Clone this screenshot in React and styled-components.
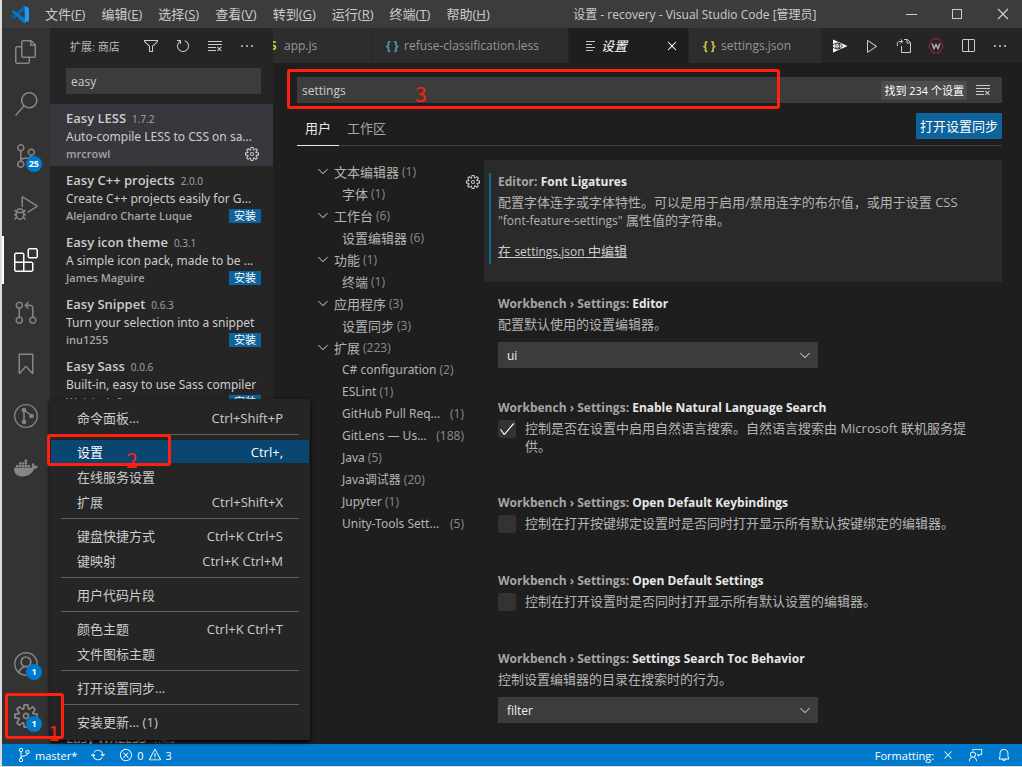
import React from 'react';
import styled, { createGlobalStyle, css } from 'styled-components';
import {
  VscAccount,
  VscBell,
  VscBookmark,
  VscCheck,
  VscChevronDown,
  VscChromeMaximize,
  VscChromeMinimize,
  VscChromeClose,
  VscClearAll,
  VscClose,
  VscDebugAlt,
  VscEllipsis,
  VscError,
  VscExtensions,
  VscFeedback,
  VscFiles,
  VscFilter,
  VscGitPullRequest,
  VscPlay,
  VscRefresh,
  VscSearch,
  VscSettingsGear,
  VscSourceControl,
  VscSplitHorizontal,
  VscSync,
  VscWarning,
  VscGear,
} from 'react-icons/vsc';
import { FaDocker } from 'react-icons/fa';

const menus = [
  ['文件', 'F'], ['编辑', 'E'], ['选择', 'S'], ['查看', 'V'],
  ['转到', 'G'], ['运行', 'R'], ['终端', 'T'], ['帮助', 'H'],
];

const extensions = [
  { name: 'Easy LESS', version: '1.7.2', text: 'Auto-compile LESS to CSS on sa...', author: 'mrcrowl', installed: true },
  { name: 'Easy C++ projects', version: '2.0.0', text: 'Create C++ projects easily for G...', author: 'Alejandro Charte Luque' },
  { name: 'Easy icon theme', version: '0.3.1', text: 'A simple icon pack, made to be ...', author: 'James Maguire' },
  { name: 'Easy Snippet', version: '0.6.3', text: 'Turn your selection into a snippet', author: 'inu1255' },
  { name: 'Easy Sass', version: '0.0.6', text: 'Built-in, easy to use Sass compiler', author: 'Wojciech Sura' },
  { name: 'Easy WXLESS', version: '1.4.0', row: 11 },
];

const toc = [
  { label: '文本编辑器', count: 1, group: true },
  { label: '字体', count: 1 },
  { label: '工作台', count: 6, group: true },
  { label: '设置编辑器', count: 6 },
  { label: '功能', count: 1, group: true },
  { label: '终端', count: 1 },
  { label: '应用程序', count: 3, group: true },
  { label: '设置同步', count: 3 },
  { label: '扩展', count: 223, group: true },
  { label: 'C# configuration', count: 2, latin: true },
  { label: 'ESLint', count: 1, latin: true },
  { label: 'GitHub Pull Req...', count: 1, latin: true, end: true },
  { label: 'GitLens — Us...', count: 188, latin: true, end: true },
  { label: 'Java', count: 5, latin: true },
  { label: 'Java调试器', count: 20, latin: true },
  { label: 'Jupyter', count: 1, latin: true },
  { label: 'Unity-Tools Sett...', count: 5, latin: true, end: true },
];

const menuGroups = [
  [{ label: '命令面板...', keys: 'Ctrl+Shift+P' }],
  [
    { label: '设置', keys: 'Ctrl+,', active: true },
    { label: '在线服务设置' },
    { label: '扩展', keys: 'Ctrl+Shift+X' },
  ],
  [
    { label: '键盘快捷方式', keys: 'Ctrl+K Ctrl+S' },
    { label: '键映射', keys: 'Ctrl+K Ctrl+M' },
  ],
  [{ label: '用户代码片段' }],
  [
    { label: '颜色主题', keys: 'Ctrl+K Ctrl+T' },
    { label: '文件图标主题' },
  ],
  [{ label: '打开设置同步...' }],
  [{ label: '安装更新... (1)' }],
];

const LogoIcon = () => (
  <svg width="17" height="17" viewBox="0 0 100 100" aria-hidden="true">
    <path fill="#0065a9" d="M96 11 75 1c-2-1-5-1-7 1L1 63c-2 2-2 5 0 6l6 5c1 1 3 1 5 0l80-61c3-2 7 0 7 3v-1c0-2-1-3-3-4z" />
    <path fill="#007acc" d="M96 89 75 99c-2 1-5 1-7-1L1 37c-2-2-2-5 0-6l6-5c1-1 3-1 5 0l80 61c3 2 7 0 7-3v1c0 2-1 3-3 4z" />
    <path fill="#1f9cf0" d="M75 99c-2 1-5 1-7-1 2 2 7 1 7-3V5c0-4-5-5-7-3 2-2 5-2 7-1l21 10c2 1 4 3 4 6v66c0 3-2 5-4 6z" />
  </svg>
);

const GitLensIcon = () => (
  <svg width="24" height="24" viewBox="0 0 24 24" fill="none" stroke="currentColor" aria-hidden="true">
    <circle cx="12" cy="12" r="11.3" strokeWidth="1.3" />
    <path d="M10 6v12M10 6l8 6" strokeWidth="1.5" />
    <g fill="currentColor" stroke="none">
      <circle cx="10" cy="6" r="2.3" />
      <circle cx="10" cy="18" r="2.3" />
      <circle cx="17.5" cy="12" r="2.3" />
    </g>
  </svg>
);

const BranchIcon = () => (
  <svg width="14" height="16" viewBox="0 0 14 16" fill="none" stroke="currentColor" aria-hidden="true">
    <circle cx="4" cy="3" r="1.7" />
    <circle cx="4" cy="13" r="1.7" />
    <circle cx="10.5" cy="5" r="1.7" />
    <path d="M4 4.700v6.600M10.500 6.700c0 3-6.500 1.300-6.500 4.300" />
  </svg>
);

const RunEyeIcon = () => (
  <svg width="16" height="16" viewBox="0 0 16 16" aria-hidden="true">
    <path d="M1 1.500 15.500 8 1 14.500z" fill="#fff" />
    <path d="M0 8c3-4 8-4 10.500 0C8 12 3 12 0 8z" fill="#fff" stroke="#222" />
    <circle cx="5.500" cy="8" r="2.400" fill="#e8a0a0" stroke="#222" strokeWidth="0.900" />
    <path d="M5.500 5.600a2.400 2.400 0 0 0 0 4.800z" fill="#9ad0a0" />
  </svg>
);

const OpenFileIcon = () => (
  <svg width="16" height="16" viewBox="0 0 16 16" fill="none" stroke="currentColor" aria-hidden="true">
    <path d="M5.500 8v6.500h9V4.500l-3-3H8M11 1.500V5h3.500" />
    <path d="M1.500 8C.5 5.500 1.500 3.500 4 3.500h2.500M4.500 1.300l2.200 2.200-2.200 2.200" />
  </svg>
);

const WIcon = () => (
  <svg width="16" height="16" viewBox="0 0 16 16" fill="none" aria-hidden="true">
    <path d="M4.700 1h6.600L15.300 8l-4 7H4.700L.7 8z" fill="#2c2326" stroke="#962c3a" />
    <path d="m4 5.500 2 5 2-4 2 4 2-5" stroke="#a8a8a8" strokeWidth="1.600" />
  </svg>
);

const SettingsTabIcon = () => (
  <svg width="10" height="10" viewBox="0 0 10 10" stroke="#c5c5c5" aria-hidden="true">
    <path d="M0 .5h9M0 3.500h6M0 6.500h9M0 9.500h7" />
  </svg>
);

const toolbar = [
  { Icon: VscFilter, name: '筛选' },
  { Icon: VscRefresh, name: '刷新' },
  { Icon: VscClearAll, name: '清除' },
  { Icon: VscEllipsis, name: '更多' },
];

const activity = [
  { Icon: VscFiles, name: '资源管理器' },
  { Icon: VscSearch, name: '搜索' },
  { Icon: VscSourceControl, name: '源代码管理', badge: 25 },
  { Icon: VscDebugAlt, name: '运行和调试' },
  { Icon: VscExtensions, name: '扩展', active: true },
  { Icon: VscGitPullRequest, name: 'GitHub' },
  { Icon: VscBookmark, name: '书签' },
  { Icon: GitLensIcon, name: 'GitLens' },
  { Icon: FaDocker, name: 'Docker' },
];

const editorActions = [
  { Icon: RunEyeIcon, name: '预览' },
  { Icon: VscPlay, name: '运行' },
  { Icon: OpenFileIcon, name: '打开设置(json)' },
  { Icon: WIcon, name: 'W' },
  { Icon: VscSplitHorizontal, name: '拆分编辑器' },
  { Icon: VscEllipsis, name: '更多操作' },
];

function Setting({ category, name, id, focused, space, children }) {
  return (
    <Item $focused={focused} $space={space}>
      {focused && (
        <ItemGear aria-label="更多操作"><VscGear size={16} /></ItemGear>
      )}
      <ItemBody $modified={focused}>
        <ItemTitle as={id ? 'label' : 'h3'} htmlFor={id}>
          <Category>{category}: </Category>
          {name}
        </ItemTitle>
        {children}
      </ItemBody>
    </Item>
  );
}

function SelectSetting({ id, name, text, value }) {
  return (
    <Setting category="Workbench › Settings" name={name} id={id} space={18}>
      <Description>{text}</Description>
      <SelectBox>
        <Select id={id} defaultValue={value}>
          <option>{value}</option>
        </Select>
        <VscChevronDown size={16} />
      </SelectBox>
    </Setting>
  );
}

function CheckSetting({ id, name, text, checked }) {
  return (
    <Setting category="Workbench › Settings" name={name} id={id} space={26}>
      <CheckRow>
        <CheckBox>
          <input type="checkbox" id={id} defaultChecked={checked} />
          {checked && <VscCheck size={18} />}
        </CheckBox>
        <Description>{text}</Description>
      </CheckRow>
    </Setting>
  );
}

export default function App() {
  return (
    <Window>
      <GlobalStyle />
      <TitleBar>
        <Logo><LogoIcon /></Logo>
        <MenuBar>
          {menus.map(([label, key]) => (
            <MenuButton key={key}>{label}(<u>{key}</u>)</MenuButton>
          ))}
        </MenuBar>
        <WindowTitle>设置 - recovery - Visual Studio Code [管理员]</WindowTitle>
        <WindowControls>
          <WindowButton aria-label="最小化"><VscChromeMinimize size={16} /></WindowButton>
          <WindowButton aria-label="最大化"><VscChromeMaximize size={16} /></WindowButton>
          <WindowButton aria-label="关闭"><VscChromeClose size={16} /></WindowButton>
        </WindowControls>
      </TitleBar>

      <Workbench>
        <ActivityBar>
          {activity.map(({ Icon, name, badge, active }) => (
            <ActivityButton key={name} aria-label={name} $active={active}>
              <Icon size={24} />
              {badge && <Badge>{badge}</Badge>}
            </ActivityButton>
          ))}
          <Spacer />
          <ActivityButton aria-label="帐户">
            <VscAccount size={24} />
            <Badge>1</Badge>
          </ActivityButton>
          <ActivityButton aria-label="管理">
            <VscSettingsGear size={24} />
            <Badge>1</Badge>
            <Marker $top={1} $left={3} $width={59} $height={46} />
            <MarkerNumber $top={24} $left={46}>1</MarkerNumber>
          </ActivityButton>
        </ActivityBar>

        <Sidebar>
          <SidebarHeader>
            <SidebarTitle>扩展: 商店</SidebarTitle>
            {toolbar.map(({ Icon, name }) => (
              <IconButton key={name} aria-label={name}><Icon size={16} /></IconButton>
            ))}
          </SidebarHeader>
          <SidebarSearch aria-label="在应用商店中搜索扩展" defaultValue="easy" />
          <ExtensionList>
            {extensions.map((ext) => (
              <Extension key={ext.name} $selected={ext.installed} $row={ext.row}>
                <ExtensionHead>
                  <strong>{ext.name}</strong>
                  <small>{ext.version}</small>
                </ExtensionHead>
                <ExtensionText>{ext.text}</ExtensionText>
                {ext.author && (
                  <ExtensionFoot>
                    <Author>{ext.author}</Author>
                    {ext.installed
                      ? <GearButton aria-label="管理"><VscGear size={16} /></GearButton>
                      : <InstallButton>安装</InstallButton>}
                  </ExtensionFoot>
                )}
              </Extension>
            ))}
          </ExtensionList>
        </Sidebar>

        <Editor>
          <TabBar>
            <Tab $scrolled>
              <TabIcon $color="#cbcb41">JS</TabIcon>
              app.js
            </Tab>
            <Tab $width={196}>
              <TabIcon $color="#519aba">{'{ }'}</TabIcon>
              refuse-classification.less
            </Tab>
            <Tab $width={119} $active>
              <TabIcon><SettingsTabIcon /></TabIcon>
              <em>设置</em>
              <TabClose aria-label="关闭"><VscClose size={16} /></TabClose>
            </Tab>
            <Tab $width={132}>
              <TabIcon $color="#cbcb41">{'{ }'}</TabIcon>
              settings.json
            </Tab>
            <EditorActions>
              {editorActions.map(({ Icon, name }) => (
                <IconButton key={name} aria-label={name}><Icon size={16} /></IconButton>
              ))}
            </EditorActions>
          </TabBar>

          <SettingsPage>
            <SearchRow>
              <SearchInput aria-label="搜索设置" defaultValue="settings" />
              <ResultCount>找到 234 个设置</ResultCount>
              <IconButton aria-label="清除设置搜索输入"><VscClearAll size={16} /></IconButton>
              <Marker $top={-8} $left={-10} $width={493} $height={40} />
              <MarkerNumber $top={0} $left={118}>3</MarkerNumber>
            </SearchRow>
            <ScopeRow>
              <Scope $active>用户</Scope>
              <Scope>工作区</Scope>
              <Spacer />
              <SyncButton>打开设置同步</SyncButton>
            </ScopeRow>
            <SettingsBody>
              <Toc>
                {toc.map(({ label, count, group, latin, end }) => (
                  <TocRow key={label} $group={group} $end={end}>
                    {group && <VscChevronDown size={16} />}
                    <TocLabel $latin={latin}>{label}</TocLabel>
                    <TocCount>({count})</TocCount>
                  </TocRow>
                ))}
              </Toc>
              <div>
                <Setting category="Editor" name="Font Ligatures" focused space={22}>
                  <Description>
                    配置字体连字或字体特性。可以是用于启用/禁用连字的布尔值，或用于设置 CSS
                    {' '}
                    <Latin>"font-feature-settings"</Latin>
                    {' '}
                    属性值的字符串。
                  </Description>
                  <EditLink href="#settings">在 <Latin>settings.json</Latin> 中编辑</EditLink>
                </Setting>
                <SelectSetting id="editor" name="Editor" text="配置默认使用的设置编辑器。" value="ui" />
                <CheckSetting
                  id="natural"
                  name="Enable Natural Language Search"
                  text="控制是否在设置中启用自然语言搜索。自然语言搜索由 Microsoft 联机服务提供。"
                  checked
                />
                <CheckSetting
                  id="keybindings"
                  name="Open Default Keybindings"
                  text="控制在打开按键绑定设置时是否同时打开显示所有默认按键绑定的编辑器。"
                />
                <CheckSetting
                  id="defaults"
                  name="Open Default Settings"
                  text="控制在打开设置时是否同时打开显示所有默认设置的编辑器。"
                />
                <SelectSetting
                  id="toc"
                  name="Settings Search Toc Behavior"
                  text="控制设置编辑器的目录在搜索时的行为。"
                  value="filter"
                />
              </div>
            </SettingsBody>
          </SettingsPage>
        </Editor>

        <ContextMenu>
          {menuGroups.map((group, index) => (
            <MenuGroup key={group[0].label} $first={index === 0}>
              {group.map(({ label, keys, active }) => (
                <MenuItem key={label} $active={active}>
                  <span>{label}</span>
                  <span>{keys}</span>
                  {active && (
                    <>
                      <Marker $top={-6} $left={-4} $width={124} $height={32} />
                      <MarkerNumber $top={3} $left={75}>2</MarkerNumber>
                    </>
                  )}
                </MenuItem>
              ))}
            </MenuGroup>
          ))}
        </ContextMenu>
      </Workbench>

      <StatusBar>
        <StatusItem><BranchIcon />master*</StatusItem>
        <StatusItem aria-label="同步更改"><VscSync size={14} /></StatusItem>
        <StatusItem><VscError size={14} />0 <VscWarning size={14} />3</StatusItem>
        <Spacer />
        <StatusItem>Formatting:&nbsp;<VscClose size={14} /></StatusItem>
        <StatusItem aria-label="反馈"><VscFeedback size={14} /></StatusItem>
        <StatusItem aria-label="通知"><VscBell size={14} /></StatusItem>
      </StatusBar>
    </Window>
  );
}

const GlobalStyle = createGlobalStyle`
  * {
    box-sizing: border-box;
  }

  body {
    margin: 0;
    overflow: hidden;
    background: #dcdcdc;
  }

  body, button, input, select {
    font-family: "Open Sans", "Noto Sans CJK SC", sans-serif;
    font-size: 13px;
    color: #cccccc;
  }

  button {
    padding: 0;
    border: 0;
    background: none;
    white-space: nowrap;
  }

  svg {
    flex: none;
    display: block;
  }
`;

const Window = styled.div`
  display: flex;
  flex-direction: column;
  height: 100vh;
  padding: 0 0 1px 2px;
`;

const Spacer = styled.div`
  flex: 1;
`;

const Latin = styled.span`
  font-size: 12px;
  line-height: 1;
`;

const Marker = styled.span`
  position: absolute;
  z-index: 20;
  top: ${({ $top }) => $top}px;
  left: ${({ $left }) => $left}px;
  width: ${({ $width }) => $width}px;
  height: ${({ $height }) => $height}px;
  border: 3px solid #ff2010;
  border-radius: 3px;
  pointer-events: none;
`;

const MarkerNumber = styled.span`
  position: absolute;
  z-index: 20;
  top: ${({ $top }) => $top}px;
  left: ${({ $left }) => $left}px;
  color: #ff2010;
  font: 21px/32px "Noto Sans CJK SC", sans-serif;
  pointer-events: none;
`;

const TitleBar = styled.header`
  display: flex;
  align-items: center;
  height: 28px;
  background: #3c3c3c;
`;

const Logo = styled.div`
  width: 35px;
  padding-left: 10px;
`;

const MenuBar = styled.nav`
  display: flex;
`;

const MenuButton = styled.button`
  padding: 0 8px;
  line-height: 26px;
`;

const WindowTitle = styled.div`
  flex: 1;
  font-size: 12px;
  text-align: center;
  white-space: nowrap;
`;

const WindowControls = styled.div`
  display: flex;
  gap: 8px;
`;

const WindowButton = styled.button`
  display: grid;
  place-items: center;
  width: 38px;
  height: 28px;
`;

const Workbench = styled.div`
  position: relative;
  display: flex;
  flex: 1;
  min-height: 0;
`;

const ActivityBar = styled.nav`
  display: flex;
  flex-direction: column;
  gap: 4px;
  width: 48px;
  padding-bottom: 4px;
  background: #333333;
`;

const ActivityButton = styled.button`
  position: relative;
  display: grid;
  place-items: center;
  width: 48px;
  height: 48px;
  color: #858585;
  ${({ $active }) => $active && css`
    color: #ffffff;
    box-shadow: inset 2px 0 #ffffff;
  `}
`;

const Badge = styled.span`
  position: absolute;
  right: 8px;
  bottom: 8px;
  min-width: 16px;
  padding: 0 3px;
  border-radius: 8px;
  background: #007acc;
  color: #ffffff;
  font-size: 9px;
  font-weight: 700;
  line-height: 16px;
  text-align: center;
`;

const Sidebar = styled.aside`
  display: flex;
  flex-direction: column;
  width: 223px;
  background: #252526;
`;

const SidebarHeader = styled.div`
  display: flex;
  align-items: center;
  height: 35px;
  padding: 0 10px 0 20px;
`;

const SidebarTitle = styled.h2`
  flex: 1;
  margin: 0;
  color: #bbbbbb;
  font-size: 11px;
  font-weight: 400;
`;

const IconButton = styled.button`
  display: grid;
  place-items: center;
  width: 32px;
  height: 24px;
`;

const SidebarSearch = styled.input`
  height: 26px;
  margin: 5px 12px 10px 16px;
  padding: 0 5px;
  border: 0;
  background: #3c3c3c;
  font-size: 12px;
`;

const ExtensionList = styled.div`
  display: grid;
  flex: 1;
  grid-auto-rows: 62px;
  align-content: start;
  min-height: 0;
  overflow: hidden;
`;

const Extension = styled.article`
  grid-row: ${({ $row }) => $row || 'auto'};
  min-width: 0;
  padding: 5px 12px 0 16px;
  background: ${({ $selected }) => ($selected ? '#37373d' : 'transparent')};
  font-size: 12px;
  line-height: 18px;
`;

const ExtensionHead = styled.div`
  display: flex;
  align-items: baseline;
  gap: 6px;
  height: 19px;

  strong {
    font-size: 13px;
    font-weight: 600;
  }

  small {
    color: #a6a6a6;
    font-size: 10px;
  }
`;

const ExtensionText = styled.div`
  overflow: hidden;
  font-family: "Noto Sans", sans-serif;
  white-space: nowrap;
`;

const ExtensionFoot = styled.div`
  display: flex;
  align-items: center;
  justify-content: space-between;
  height: 16px;
`;

const Author = styled.span`
  color: #a6a6a6;
  font-size: 11px;
  font-weight: 600;
`;

const InstallButton = styled.button`
  width: 32px;
  height: 14px;
  background: #0e639c;
  color: #ffffff;
  font-size: 11px;
  line-height: 14px;
`;

const GearButton = styled.button`
  margin: 0 1px;
`;

const Editor = styled.main`
  display: flex;
  flex: 1;
  flex-direction: column;
  min-width: 0;
  overflow: hidden;
  background: #1e1e1e;
`;

const TabBar = styled.div`
  display: flex;
  height: 35px;
  background: #252526;
`;

const Tab = styled.div`
  display: flex;
  flex: none;
  align-items: center;
  width: ${({ $width }) => $width}px;
  margin-right: 1px;
  padding-left: 14px;
  background: #2d2d2d;
  color: #969696;
  font-size: 12px;
  white-space: nowrap;
  ${({ $active }) => $active && css`
    background: #1e1e1e;
    color: #ffffff;
    font-size: 13px;
  `}
  ${({ $scrolled }) => $scrolled && css`
    width: 105px;
    margin-left: -7px;
    padding-left: 0;
  `}
`;

const TabIcon = styled.span`
  width: 18px;
  padding-left: ${({ $color }) => ($color ? 0 : 3)}px;
  color: ${({ $color }) => $color};
  font-size: 12px;
  font-weight: 700;
`;

const TabClose = styled.button`
  margin: 0 8px 0 auto;
  color: #ffffff;
`;

const EditorActions = styled.div`
  display: flex;
  align-items: center;
  margin-left: auto;
  padding-right: 6px;
`;

const SettingsPage = styled.section`
  padding: 14px 20px 0 24px;
`;

const SearchRow = styled.div`
  position: relative;
  display: flex;
  align-items: center;
  height: 26px;
  padding-right: 3px;
  background: #3c3c3c;
`;

const SearchInput = styled.input`
  flex: 1;
  min-width: 0;
  padding: 0 5px;
  border: 0;
  background: none;
  font-size: 12px;
`;

const ResultCount = styled.span`
  padding: 0 3px;
  border-radius: 2px;
  background: #4d4d4d;
  color: #ffffff;
  font-size: 11px;
  line-height: 19px;
`;

const ScopeRow = styled.div`
  display: flex;
  align-items: flex-start;
  height: 43px;
  padding-top: 10px;
  border-bottom: 1px solid #3c3c3c;
`;

const Scope = styled.button`
  height: 33px;
  padding: 0 8px 3px;
  border-bottom: 1px solid ${({ $active }) => ($active ? '#e7e7e7' : 'transparent')};
  color: ${({ $active }) => ($active ? '#e7e7e7' : '#a6a6a6')};
`;

const SyncButton = styled.button`
  height: 26px;
  padding: 0 4px 2px;
  background: #0e639c;
  color: #ffffff;
`;

const SettingsBody = styled.div`
  display: grid;
  grid-template-columns: 187px 1fr;
  padding-top: 14px;
`;

const Toc = styled.nav`
  padding: 0 20px 0 18px;
`;

const TocRow = styled.div`
  display: flex;
  align-items: center;
  justify-content: ${({ $end }) => ($end ? 'space-between' : 'flex-start')};
  gap: 3px;
  height: 22px;
  padding-left: ${({ $group }) => ($group ? 0 : 27)}px;
  color: #b4b4b4;
`;

const TocLabel = styled.span`
  font-family: ${({ $latin }) => $latin && '"Noto Sans", "Noto Sans CJK SC", sans-serif'};
  font-size: ${({ $latin }) => ($latin ? 12 : 13)}px;
  white-space: nowrap;
`;

const TocCount = styled.span`
  color: #8c8c8c;
  font-size: 12px;
`;

const Item = styled.div`
  position: relative;
  padding: 13px 28px ${({ $space }) => $space}px 14px;
  background: ${({ $focused }) => ($focused ? '#2a2a2a' : 'transparent')};
`;

const ItemBody = styled.div`
  ${({ $modified }) => $modified && css`
    margin: 0 0 -4px -9px;
    padding: 0 0 4px 7px;
    border-left: 2px solid #0c6c8c;
  `}
`;

const ItemGear = styled.button`
  position: absolute;
  top: 14px;
  left: -19px;
`;

const ItemTitle = styled.h3`
  display: block;
  margin: 0 0 2px;
  color: #e7e7e7;
  font-size: 12px;
  font-weight: 700;
  line-height: 18px;
`;

const Category = styled.span`
  color: #a6a6a6;
`;

const Description = styled.div`
  color: #b4b4b4;
  line-height: 18px;
`;

const EditLink = styled.a`
  display: block;
  width: fit-content;
  margin-top: 13px;
  color: #cccccc;
  line-height: 18px;
`;

const SelectBox = styled.div`
  display: grid;
  align-items: center;
  max-width: 320px;
  margin-top: 9px;

  svg {
    grid-area: 1 / 1;
    justify-self: end;
    margin-right: 5px;
    pointer-events: none;
  }
`;

const Select = styled.select`
  grid-area: 1 / 1;
  height: 26px;
  padding: 0 9px;
  border: 0;
  background: #3c3c3c;
  color: #f0f0f0;
  font-size: 12px;
  appearance: none;
`;

const CheckRow = styled.div`
  display: flex;
  align-items: flex-start;
  gap: 9px;
`;

const CheckBox = styled.span`
  display: grid;
  flex: none;
  margin-top: 1px;

  input {
    grid-area: 1 / 1;
    width: 18px;
    height: 18px;
    margin: 0;
    border-radius: 3px;
    background: #333333;
    appearance: none;
  }

  svg {
    grid-area: 1 / 1;
    color: #ffffff;
    pointer-events: none;
  }
`;

const ContextMenu = styled.div`
  position: absolute;
  z-index: 10;
  bottom: 4px;
  left: 48px;
  width: 260px;
  padding: 6px 1px;
  background: #252526;
  box-shadow: 0 2px 4px #000000;
`;

const MenuGroup = styled.div`
  display: flex;
  flex-direction: column;
  ${({ $first }) => !$first && css`
    &::before {
      content: '';
      height: 1px;
      margin: 4px 10px;
      background: #606060;
    }
  `}
`;

const MenuItem = styled.button`
  position: relative;
  display: flex;
  align-items: center;
  justify-content: space-between;
  height: 23px;
  margin: 1px 0;
  padding: 0 26px;
  background: ${({ $active }) => ($active ? '#094771' : 'transparent')};
  color: ${({ $active }) => ($active ? '#ffffff' : '#cccccc')};
`;

const StatusBar = styled.footer`
  display: flex;
  height: 22px;
  padding: 0 4px 0 8px;
  background: #007acc;
`;

const StatusItem = styled.button`
  display: flex;
  align-items: center;
  gap: 4px;
  padding: 0 7px;
  color: #ffffff;
  font-size: 11px;
`;
